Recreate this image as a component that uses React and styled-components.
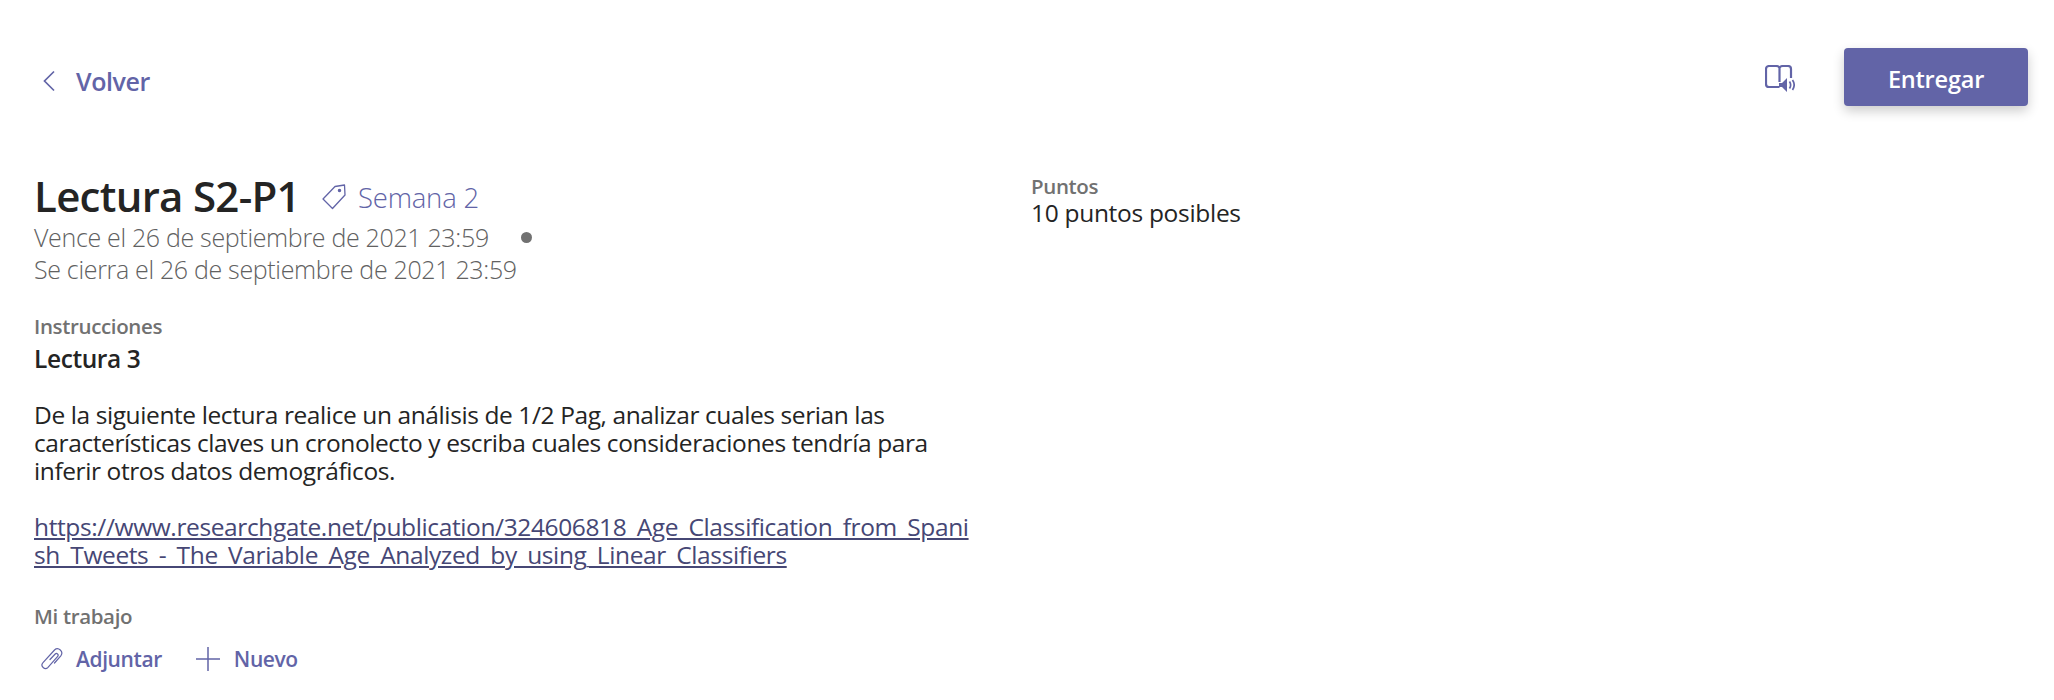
import React from "react";
import styled, { createGlobalStyle } from "styled-components";

const Global = createGlobalStyle`
  html, body { margin: 0; padding: 0; background: #fff; }
  body { font-family: "Open Sans", "Noto Sans", sans-serif; color: #242424; }
`;
const Page = styled.div`
  width: 2054px; height: 700px; overflow: hidden; box-sizing: border-box;
  padding: 48px 26px 0 34px;
`;
const TopBar = styled.header`
  display: flex; align-items: center; justify-content: space-between; height: 58px;
`;
const LinkButton = styled.button`
  display: inline-flex; align-items: center; border: 0; background: none; padding: 0;
  font: 600 ${p => p.$size || 23}px "Open Sans", sans-serif; letter-spacing: -0.4px;
  color: #6264a7; gap: ${p => p.$gap || 12}px;
`;
const BackButton = styled(LinkButton)`
  padding: 7px 0 0 8px;
`;
const Actions = styled.div`
  display: flex; align-items: center; gap: 49px;
`;
const ReaderSlot = styled.span`
  display: inline-flex; margin-top: 3px;
`;
const Submit = styled.button`
  width: 184px; height: 58px; border: 0; border-radius: 4px; background: #6264a7; color: #fff;
  font: 600 23.5px "Open Sans", sans-serif; letter-spacing: -0.2px; padding: 3px 0 0;
  box-shadow: 0 5px 12px rgba(0,0,0,.2);
`;
const Columns = styled.div`
  display: grid; grid-template-columns: 997px 1fr; margin-top: 63px;
`;
const Main = styled.main`
  display: flex; flex-direction: column; width: 935px;
`;
const TitleRow = styled.div`
  display: flex; align-items: center; height: 52px;
`;
const Title = styled.h1`
  margin: 2px 0 0; font: 600 42px/52px "Open Sans", sans-serif; letter-spacing: -0.7px; color: #242424;
`;
const Category = styled.span`
  display: inline-flex; align-items: center; gap: 12px; margin-left: 22px; padding-top: 4px;
  font: 300 27.5px "Open Sans", sans-serif; letter-spacing: -0.2px; color: #6264a7;
`;
const DateLine = styled.div`
  display: flex; align-items: center; font-size: 25px; font-weight: 300; line-height: 32px; letter-spacing: -0.33px; color: #616161;
`;
const Dot = styled.span`
  width: 11px; height: 11px; border-radius: 50%; background: #717171; margin-left: 32px;
`;
const Label = styled.div`
  font-size: 20.5px; font-weight: 600; line-height: 28px; color: #717171; letter-spacing: -0.35px;
  margin-top: ${p => p.$top || 0}px;
`;
const Strong = styled.div`
  font-size: 24.5px; font-weight: 600; line-height: 28px; letter-spacing: -0.4px; margin-top: 5px;
`;
const Paragraph = styled.p`
  margin: 28px 0 0; font-size: 24.5px; line-height: 28px; letter-spacing: -0.4px; color: #242424;
`;
const Anchor = styled.a`
  display: block; margin-top: 28px; font-size: 24.5px; line-height: 28px; letter-spacing: -0.38px;
  color: #464775; text-decoration: underline; word-break: break-all;
`;
const WorkActions = styled.div`
  display: flex; align-items: center; gap: 34px; margin-top: 15px; padding-left: 7px;
`;
const Side = styled.aside`
  display: flex; flex-direction: column; padding-top: 3px;
`;
const SideValue = styled.div`
  font-size: 24.5px; line-height: 28px; letter-spacing: -0.3px; color: #242424; margin-top: -1px;
`;

const Chevron = () => (
  <svg width="15" height="22" viewBox="0 0 15 22" fill="none" stroke="#6264a7" strokeWidth="1.7"><path d="M12 1.5 2.5 11l9.500 9.500" /></svg>
);
const ReaderIcon = () => (
  <svg width="30" height="28" viewBox="0 0 30 28" fill="none">
    <path d="M14.5 22H4a3 3 0 0 1-3-3V4a3 3 0 0 1 3-3h7c1.500 0 3 .6 3.500 2 .5-1.400 2-2 3.500-2H23a3 3 0 0 1 3 3v9M14.500 3v14" stroke="#6264a7" strokeWidth="2.200" />
    <path d="M14 18h3l5-5v14l-5-5h-3z" fill="#6264a7" />
    <path d="M24.500 16.500c1.300 2 1.300 5 0 7M27.500 15c2 3 2 7 0 10" stroke="#6264a7" strokeWidth="1.700" />
  </svg>
);
const Tag = () => (
  <svg width="24" height="26" viewBox="0 0 24 26" fill="none" stroke="#6264a7" strokeWidth="1.300"><path d="M1 15 13 2.500 22.500 1l.5 10L10.500 24.500z" strokeLinejoin="round" /><circle cx="17.500" cy="6.500" r="1.100" fill="#6264a7" /></svg>
);
const Clip = () => (
  <svg width="22" height="24" viewBox="0 0 22 24" fill="none" stroke="#6264a7" strokeWidth="1.200" strokeLinecap="round"><path d="M9 12.500 14.200 7a1.700 1.700 0 0 1 2.500 2.300L7 20.300a3.400 3.400 0 0 1-5-4.700L13.500 3a4.300 4.300 0 0 1 6.300 5.800L13.500 16" /></svg>
);
const Plus = () => (
  <svg width="24" height="24" viewBox="0 0 24 24" stroke="#6264a7" strokeWidth="1.500"><path d="M12 0v24M0 12h24" /></svg>
);

export default function App() {
  return (
    <Page>
      <Global />
      <TopBar>
        <BackButton $size={25} $gap={19}><Chevron />Volver</BackButton>
        <Actions>
          <ReaderSlot><ReaderIcon /></ReaderSlot>
          <Submit>Entregar</Submit>
        </Actions>
      </TopBar>
      <Columns>
        <Main>
          <TitleRow>
            <Title>Lectura S2-P1</Title>
            <Category><Tag />Semana 2</Category>
          </TitleRow>
          <DateLine>Vence el 26 de septiembre de 2021 23:59<Dot /></DateLine>
          <DateLine>Se cierra el 26 de septiembre de 2021 23:59</DateLine>
          <Label $top={27}>Instrucciones</Label>
          <Strong>Lectura 3</Strong>
          <Paragraph>De la siguiente lectura realice un análisis de 1/2 Pag, analizar cuales serian las características claves un cronolecto y escriba cuales consideraciones tendría para inferir otros datos demográficos.</Paragraph>
          <Anchor href="#">https://www.researchgate.net/publication/324606818_Age_Classification_from_Spanish_Tweets_-_The_Variable_Age_Analyzed_by_using_Linear_Classifiers</Anchor>
          <Label $top={33}>Mi trabajo</Label>
          <WorkActions>
            <LinkButton $size={21} $gap={13}><Clip />Adjuntar</LinkButton>
            <LinkButton $size={21} $gap={14}><Plus />Nuevo</LinkButton>
          </WorkActions>
        </Main>
        <Side>
          <Label>Puntos</Label>
          <SideValue>10 puntos posibles</SideValue>
        </Side>
      </Columns>
    </Page>
  );
}
